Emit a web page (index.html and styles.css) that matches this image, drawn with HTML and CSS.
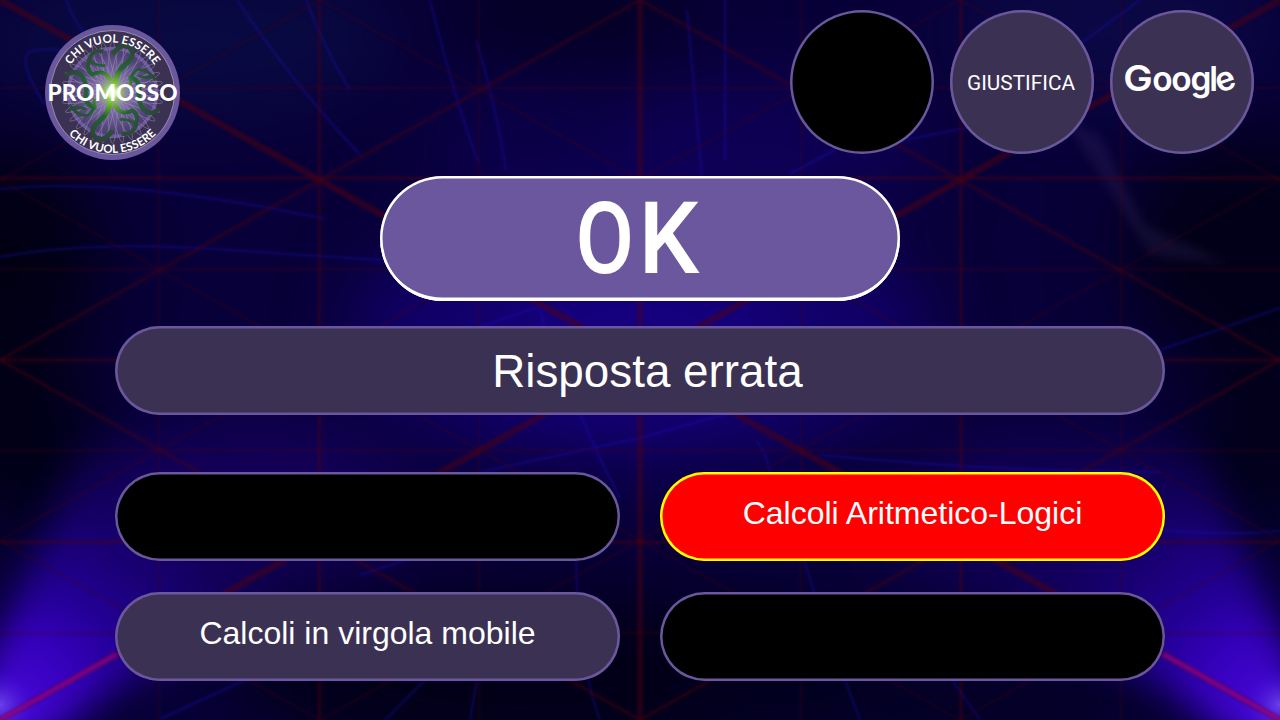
FILE: index.html
```html
<!DOCTYPE html>
<html lang="it">
<head>
<meta charset="utf-8">
<title>Chi vuol essere promosso</title>
<link rel="stylesheet" href="styles.css">
</head>
<body>
<svg class="backdrop" viewBox="0 0 1280 720" aria-hidden="true">
  <defs>
    <filter id="soft" x="-50%" y="-50%" width="200%" height="200%" color-interpolation-filters="sRGB"><feGaussianBlur stdDeviation="36"/></filter>
    <filter id="edge" x="-50%" y="-50%" width="200%" height="200%" color-interpolation-filters="sRGB"><feGaussianBlur stdDeviation="18"/></filter>
    <filter id="mist" x="-50%" y="-50%" width="200%" height="200%" color-interpolation-filters="sRGB"><feGaussianBlur stdDeviation="5"/></filter>
    <filter id="haze" color-interpolation-filters="sRGB"><feGaussianBlur stdDeviation="0.8"/></filter>
    <radialGradient id="corner" gradientUnits="userSpaceOnUse" cx="0" cy="720" r="330">
      <stop offset="0" stop-color="#4a0cdc"/><stop offset=".25" stop-color="#3800c0"/><stop offset=".42" stop-color="#240098"/>
      <stop offset=".65" stop-color="#1a0078" stop-opacity=".8"/><stop offset="1" stop-color="#12005c" stop-opacity="0"/>
    </radialGradient>
    <radialGradient id="tip" gradientUnits="userSpaceOnUse" cx="0" cy="705" r="36">
      <stop offset="0" stop-color="#7450f0" stop-opacity=".8"/><stop offset="1" stop-color="#4408d8" stop-opacity="0"/>
    </radialGradient>
    <g id="glow">
      <path d="M-40 760L-25 690L90 440L330 430L310 590L110 690L20 760Z" fill="url(#corner)" filter="url(#edge)"/>
      <circle cx="0" cy="705" r="36" fill="url(#tip)"/>
    </g>
  </defs>
  <rect width="1280" height="720" fill="#080038"/>
  <g filter="url(#soft)">
    <ellipse cx="640" cy="335" rx="290" ry="130" fill="#12006a"/>
    <ellipse cx="640" cy="340" rx="140" ry="70" fill="#160080"/>
    <ellipse cx="760" cy="150" rx="170" ry="70" fill="#0e0054"/>
    <ellipse cx="520" cy="150" rx="90" ry="70" fill="#0b0048"/>
    <ellipse cx="190" cy="40" rx="200" ry="70" fill="#090a42"/>
    <ellipse cx="1110" cy="30" rx="170" ry="70" fill="#0b0845"/>
    <ellipse cx="570" cy="10" rx="130" ry="50" fill="#040024"/>
    <ellipse cx="0" cy="260" rx="100" ry="120" fill="#010013"/>
    <ellipse cx="20" cy="440" rx="80" ry="95" fill="#010016"/>
    <ellipse cx="1250" cy="250" rx="125" ry="120" fill="#020018"/>
    <ellipse cx="1270" cy="440" rx="80" ry="90" fill="#02001a"/>
    <ellipse cx="570" cy="680" rx="340" ry="85" fill="#020018"/>
    <ellipse cx="920" cy="705" rx="240" ry="40" fill="#030020"/>
    <ellipse cx="250" cy="500" rx="160" ry="80" fill="#14005a"/>
    <ellipse cx="1040" cy="520" rx="140" ry="80" fill="#120058"/>
  </g>
  <use href="#glow"/>
  <use href="#glow" transform="matrix(-1 0 0 1 1280 0)"/>
  <g fill="none" stroke="#1c14c8" stroke-width="2" opacity=".36" filter="url(#haze)">
    <path d="M66 0Q76 26 90 40M45 105Q10 50 38 50Q65 47 80 55"/>
    <path d="M0 189Q120 176 325 219M0 257Q90 240 230 250T430 262"/>
    <path d="M237 0Q290 80 360 155M306 0Q325 50 350 90M430 0Q455 100 478 162M476 40Q495 100 506 170"/>
    <path d="M687 10L702 176M725 0V160M790 174L835 150M880 145L965 128L1140 0"/>
    <path d="M470 330L540 306L545 330M580 414Q600 460 620 498M480 472L640 438L740 410"/>
    <path d="M756 440Q770 460 770 475M820 455Q1000 472 1160 472M1160 530Q1230 536 1280 531M1160 350L1280 308"/>
    <path d="M360 575L405 560M576 560Q580 670 600 720M804 560L815 595M845 680L860 720M952 680L980 720M160 719L245 680M385 720L425 680M470 720L477 680"/>
  </g>
  <path d="M1065 120L1100 135L1145 225L1230 265L1150 255Z" fill="#44346c" opacity=".22" filter="url(#mist)"/>
  <g class="laser">
    <path class="fine" d="M159 0V720M479 0V720M801 0V720M1121 0V720M0 88H1280M0 269H1280M0 450.500H1280M0 633H1280"/>
    <path class="mid" d="M319.500 0V720M961 0V720M0 178H1280M0 360H1280M0 542H1280"/>
    <path class="wide" d="M640 0V720"/>
    <path class="fine" d="M0 180L320 0L1280 540L960 720M0 540L960 0L1280 180L320 720ZM0 180L960 720"/>
    <path class="mid" d="M0 360L640 0L1280 360L640 720Z"/>
    <path class="bold" d="M0 0L1280 720M1280 0L0 720"/>
  </g>
  <g stroke="#b000a8" stroke-width="5" opacity=".5" filter="url(#haze)"><path d="M0 720L117 654M1280 720L1163 654"/></g>
</svg>

<main class="game">
  <header class="topbar">
    <svg class="logo" viewBox="-67.500 -67.500 135 135" role="img" aria-label="Chi vuol essere promosso">
      <defs>
        <radialGradient id="disc"><stop offset="0" stop-color="#c7c0dc"/><stop offset=".4" stop-color="#7c6ba8"/><stop offset=".85" stop-color="#51437a"/><stop offset="1" stop-color="#4c3f72"/></radialGradient>
        <radialGradient id="spark"><stop offset="0" stop-color="#fff"/><stop offset=".25" stop-color="#d5f5a0"/><stop offset=".5" stop-color="#86d82e" stop-opacity=".5"/><stop offset="1" stop-color="#4a8a3a" stop-opacity="0"/></radialGradient>
        <radialGradient id="vine" gradientUnits="userSpaceOnUse" cx="0" cy="0" r="50"><stop offset="0" stop-color="#b8f03c"/><stop offset=".25" stop-color="#6cb32c"/><stop offset=".5" stop-color="#266236"/><stop offset="1" stop-color="#2c4438"/></radialGradient>
        <path id="arcTop" d="M-50 0A50 50 0 0 1 50 0"/>
        <path id="arcBottom" d="M-60.500 0A60.500 60.500 0 0 0 60.500 0"/>
        <g id="loops"><ellipse rx="51" ry="5"/><ellipse rx="51" ry="5" transform="rotate(11.250)"/><ellipse rx="51" ry="5" transform="rotate(22.500)"/><ellipse rx="51" ry="5" transform="rotate(33.750)"/></g>
        <g id="vines">
          <path stroke-width="5" d="M0 -38Q9 -50 16 -46Q24 -40 16 -31Q2 -20 2 -7"/>
          <path stroke-width="4" d="M-2 -12Q-8 -24 -20 -18Q-28 -22 -22 -36Q-18 -43 -9 -41"/>
          <path stroke-width="2.500" d="M-25 -33Q-17 -26 -7 -27"/>
          <path stroke-width="4.500" d="M-47 -16Q-39 -24 -31 -17Q-24 -8 -27 6Q-24 15 -16 15"/>
          <path stroke-width="3" d="M-43 12Q-36 24 -25 23Q-17 19 -18 6M-43 17Q-34 13 -26 17"/>
        </g>
      </defs>
      <circle r="67.500" fill="#6a579d"/>
      <circle r="62" fill="#3b3153" stroke="#aaa0bd" stroke-width=".8"/>
      <circle r="44" fill="url(#disc)" stroke="#6a579d" stroke-width="3.500"/>
      <g fill="none" stroke="#a79eb0" stroke-width=".55" opacity=".75">
        <use href="#loops"/><use href="#loops" transform="rotate(45)"/><use href="#loops" transform="rotate(90)"/><use href="#loops" transform="rotate(135)"/>
      </g>
      <g fill="none" stroke="url(#vine)"><use href="#vines"/><use href="#vines" transform="rotate(180)"/></g>
      <circle r="17" fill="url(#spark)"/>
      <g class="logo-arc">
        <text><textPath href="#arcTop" startOffset="50%" textLength="99">CHI VUOL ESSERE</textPath></text>
        <text><textPath href="#arcBottom" startOffset="50%" textLength="98">CHI VUOL ESSERE</textPath></text>
      </g>
      <text class="logo-name" x="-65" y="8.500" textLength="130" lengthAdjust="spacingAndGlyphs">PROMOSSO</text>
    </svg>
    <nav class="helps">
      <div class="help used"></div>
      <div class="help"><svg viewBox="0 0 144 144"><text class="help-label" x="17" y="79.700" textLength="108" lengthAdjust="spacingAndGlyphs">GIUSTIFICA</text></svg></div>
      <div class="help"><svg viewBox="0 0 144 144"><text class="brand"><tspan class="brand-cap" x="13.200" y="80.700" textLength="29.500" lengthAdjust="spacingAndGlyphs">G</tspan><tspan x="42.300 61.300 80.600 99.300 109.300" y="80.700 80.700 80.700 80.700 83.300" rotate="0 0 0 0 -20">oogle</tspan></text></svg></div>
    </nav>
  </header>
  <button class="confirm"><svg viewBox="0 0 520 125"><g class="confirm-label"><text transform="translate(195.500 96.500) scale(.85 1)">O</text><text transform="translate(258.500 96.500) scale(.96 1)">K</text></g></svg></button>
  <section class="pill question">Risposta errata</section>
  <section class="answers">
    <div class="pill used"></div>
    <div class="pill answer wrong">Calcoli Aritmetico-Logici</div>
    <div class="pill answer">Calcoli in virgola mobile</div>
    <div class="pill used"></div>
  </section>
</main>
</body>
</html>
```
FILE: styles.css
```css
* { box-sizing: border-box; }
body {
  margin: 0;
  width: 1280px;
  height: 720px;
  overflow: hidden;
  background: #080038;
  color: #fff;
  font-family: "Liberation Sans", Arial, sans-serif;
}
.backdrop { position: absolute; inset: 0; width: 1280px; height: 720px; }
.laser { fill: none; stroke: #500012; filter: url(#haze); }
.fine { stroke-width: 2; opacity: .3; }
.mid { stroke-width: 3.500px; opacity: .4; }
.wide { stroke-width: 6px; opacity: .42; }
.bold { stroke-width: 6.500px; opacity: .5; }
.game {
  position: relative;
  display: flex;
  flex-direction: column;
  height: 720px;
  padding: 10px 26px 0 45px;
}
.topbar { display: flex; justify-content: space-between; height: 144px; }
.logo { width: 135px; height: 135px; margin-top: 15px; overflow: visible; }
.logo-arc { font: 700 11.500px Lato, sans-serif; fill: #fff; text-anchor: middle; }
.logo-name { font: 900 22px Lato, sans-serif; fill: #fff; }
.helps { display: flex; gap: 16px; }
.help {
  width: 144px;
  height: 144px;
  border-radius: 50%;
  background: #3b3153;
  box-shadow: inset 0 0 0 2.500px #6a579d;
}
.help svg, .confirm svg { display: block; width: 100%; height: 100%; }
.help-label { font: 400 20.500px Roboto, sans-serif; fill: #fff; }
.brand { font: 600 33.500px Inter, sans-serif; fill: #fff; }
.brand-cap { font-size: 36px; font-weight: 600; }
.confirm {
  width: 520px;
  height: 125px;
  margin: 22px 0 0 335px;
  padding: 0;
  border: 0;
  border-radius: 63px;
  background: #6a579d;
  box-shadow: inset 0 0 0 2.500px #fff, inset 0 -3.500px 0 #fff;
}
.confirm-label { font: 500 100px Roboto, sans-serif; fill: #fff; }
.pill {
  display: flex;
  align-items: center;
  justify-content: center;
  height: 89px;
  border-radius: 45px;
  background: #3b3153;
  box-shadow: inset 0 0 0 2.500px #6a579d;
}
.question { width: 1050px; margin: 25px 0 0 70px; padding: 2px 0 0 15px; font-size: 45.800px; }
.answers {
  display: grid;
  grid-template-columns: 505px 505px;
  gap: 31px 40px;
  margin: 57px 0 0 70px;
}
.answer { padding-bottom: 6px; font-size: 32px; }
.wrong { background: #f00; box-shadow: inset 0 0 0 2.500px #ff0; }
.used { background: #000; }
```
